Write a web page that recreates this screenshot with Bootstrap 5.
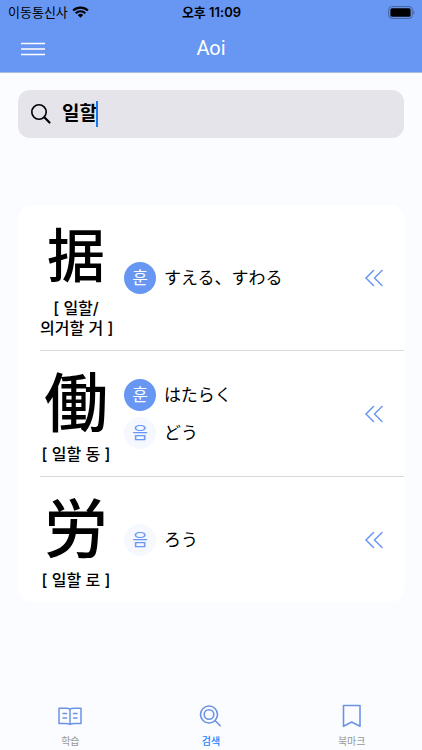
<!DOCTYPE html>
<html lang="ko">
<head>
<meta charset="utf-8">
<meta name="viewport" content="width=device-width, initial-scale=1">
<title>Aoi</title>
<link href="https://cdn.jsdelivr.net/npm/bootstrap@5.3.0/dist/css/bootstrap.min.css" rel="stylesheet">
<style>
  :root { --aoi: #6897f3; --page: #fbfcff; }
  body { background: var(--page); color: #000; font-family: Inter, "Noto Sans CJK KR", sans-serif; }
  svg { display: block; fill: none; }
  .top-area { background: var(--aoi); border-bottom: 1px solid #a9bbdc; }
  .status-row { height: 24px; padding: 0 7px 0 8px; font-size: 13px; line-height: 24px; }
  .status-row > * { flex: 1 1 0; }
  .title-row { height: 48px; padding: 0 20px; }
  .title-row > * { flex: 1 1 0; }
  .title-text { font-family: Roboto, sans-serif; font-size: 20px; line-height: 28px; }
  .search-box { background: #e5e4ea; height: 48px; border-radius: 12px; margin: 17px 18px 0; padding: 0 12px; }
  .search-field { margin-left: 10px; }
  .search-input { font-size: 19px; line-height: 28px; font-weight: 700; color: #000; }
  .search-input:focus { outline: 0; }
  .caret-bar { position: absolute; left: 34px; top: 1px; width: 2px; height: 26px; background: #1677f0; }
  .kanji-list { margin: 67px 18px 0; background: #fff; border-radius: 14px; padding-left: 22px; }
  .kanji-row { padding-right: 20px; }
  .kanji-row + .kanji-row { border-top: 1px solid #d9d9dc; }
  .kanji-cell { width: 72px; padding: 7px 0 12px; }
  .glyph { font-family: "Noto Sans CJK JP", sans-serif; font-weight: 500; font-size: 64px; line-height: 80px; margin-bottom: 6px; }
  .glyph-fit { font-size: 58px; }
  .meaning { font-size: 16px; line-height: 20px; font-weight: 500; }
  .readings { margin-left: 12px; gap: 6px; }
  .kind { width: 32px; height: 32px; font-size: 17px; line-height: 32px; background: #f5f8ff; color: var(--aoi); }
  .kind-hun { background: var(--aoi); color: #fff; }
  .kana { font-family: "Noto Sans CJK JP", sans-serif; font-size: 17px; line-height: 24px; font-weight: 400; margin-left: 8px; padding-bottom: 2px; }
  .tab-bar { padding: 0 0 2px; }
  .tab-link { font-size: 10px; line-height: 14px; color: #999; gap: 6px; }
  .tab-link.current { color: #1683ff; font-weight: 500; }
</style>
</head>
<body class="d-flex flex-column min-vh-100">
<header class="top-area">
  <div class="status-row d-flex align-items-center">
    <div class="d-flex align-items-center gap-1">
      <span>이동통신사</span>
      <svg width="17" height="12" viewBox="0 0 17 12" aria-hidden="true"><path d="M1.1 4.6a10.6 10.6 0 0 1 14.8 0M3.7 7.2a6.9 6.9 0 0 1 9.6 0" stroke="#000" stroke-width="2.1"/><path d="M8.5 11.8 5.8 9.1a3.9 3.9 0 0 1 5.4 0z" fill="#000"/></svg>
    </div>
    <div class="text-center fw-semibold">오후 11:09</div>
    <div class="d-flex justify-content-end">
      <svg width="27" height="13" viewBox="0 0 27 13" aria-hidden="true"><rect x=".7" y=".6" width="23.6" height="11.8" rx="3" stroke="#456398"/><rect x="2.4" y="2.2" width="20.2" height="8.6" rx="1.6" fill="#000"/><path d="M25.4 4.5c1.5.6 1.5 3.4 0 4z" fill="#456398"/></svg>
    </div>
  </div>
  <div class="title-row d-flex align-items-center">
    <div><button type="button" class="btn p-0 border-0" aria-label="메뉴"><svg width="26" height="16" viewBox="0 0 26 16"><path d="M1 1.500h24M1 7h24M1 12.500h24" stroke="#fff" stroke-width="1.6"/></svg></button></div>
    <h1 class="title-text text-white text-center fw-normal m-0">Aoi</h1>
    <div></div>
  </div>
</header>

<main class="flex-grow-1">
  <div class="search-box d-flex align-items-center">
    <label for="q" aria-label="검색"><svg width="22" height="22" viewBox="0 0 22 22"><circle cx="9" cy="9" r="7.200" stroke="#000" stroke-width="1.600"/><path d="m14.300 14.300 5.200 5.200" stroke="#000" stroke-width="2.200" stroke-linecap="round"/></svg></label>
    <div class="search-field position-relative flex-grow-1">
      <input id="q" type="text" class="search-input w-100 border-0 bg-transparent p-0 d-block" value="일할">
      <span class="caret-bar"></span>
    </div>
  </div>

  <section class="kanji-list">
    <article class="kanji-row d-flex align-items-center">
      <div class="kanji-cell text-center">
        <div class="glyph glyph-fit" lang="ja">据</div>
        <div class="meaning text-nowrap">[ 일할/<br>의거할 거 ]</div>
      </div>
      <div class="readings d-flex flex-column flex-grow-1">
        <div class="d-flex align-items-center"><span class="kind kind-hun rounded-circle text-center">훈</span><span class="kana" lang="ja">すえる、すわる</span></div>
      </div>
      <button type="button" class="btn p-0 border-0" aria-label="펼치기"><svg width="20" height="18" viewBox="0 0 20 18"><path d="M9.500 1.500 2 9l7.500 7.500M18 1.500 10.500 9l7.500 7.500" stroke="#6897f3" stroke-width="1.500" stroke-linecap="round"/></svg></button>
    </article>
    <article class="kanji-row d-flex align-items-center">
      <div class="kanji-cell text-center">
        <div class="glyph" lang="ja">働</div>
        <div class="meaning text-nowrap">[ 일할 동 ]</div>
      </div>
      <div class="readings d-flex flex-column flex-grow-1">
        <div class="d-flex align-items-center"><span class="kind kind-hun rounded-circle text-center">훈</span><span class="kana" lang="ja">はたらく</span></div>
        <div class="d-flex align-items-center"><span class="kind rounded-circle text-center">음</span><span class="kana" lang="ja">どう</span></div>
      </div>
      <button type="button" class="btn p-0 border-0" aria-label="펼치기"><svg width="20" height="18" viewBox="0 0 20 18"><path d="M9.500 1.500 2 9l7.500 7.500M18 1.500 10.500 9l7.500 7.500" stroke="#6897f3" stroke-width="1.500" stroke-linecap="round"/></svg></button>
    </article>
    <article class="kanji-row d-flex align-items-center">
      <div class="kanji-cell text-center">
        <div class="glyph" lang="ja">労</div>
        <div class="meaning text-nowrap">[ 일할 로 ]</div>
      </div>
      <div class="readings d-flex flex-column flex-grow-1">
        <div class="d-flex align-items-center"><span class="kind rounded-circle text-center">음</span><span class="kana" lang="ja">ろう</span></div>
      </div>
      <button type="button" class="btn p-0 border-0" aria-label="펼치기"><svg width="20" height="18" viewBox="0 0 20 18"><path d="M9.500 1.500 2 9l7.500 7.500M18 1.500 10.500 9l7.500 7.500" stroke="#6897f3" stroke-width="1.500" stroke-linecap="round"/></svg></button>
    </article>
  </section>
</main>

<nav class="tab-bar d-flex">
  <a href="#study" class="tab-link col d-flex flex-column align-items-center text-decoration-none">
    <svg width="24" height="24" viewBox="0 0 24 24" stroke="#6b93e4" stroke-width="1.500" stroke-linejoin="round" stroke-linecap="round"><path d="M12 5.200C10.500 4 8.500 4.200 7 4.200H1V19.500h6c2 0 3.800 0 5 1 1.200-1 3-1 5-1h6V4.200h-6c-1.500 0-3.500-.2-5 1zM12 5.200v15.300M5 9.500h3.500M5 14h3.500M15.500 9.500H19M15.500 14H19"/></svg>
    <span>학습</span>
  </a>
  <a href="#search" class="tab-link current col d-flex flex-column align-items-center text-decoration-none" aria-current="page">
    <svg width="24" height="24" viewBox="0 0 24 24" stroke="#6b93e4" stroke-width="1.600" stroke-linecap="round"><circle cx="10" cy="10.500" r="8.500"/><circle cx="10" cy="10.500" r="4.800"/><path d="m16.200 16.700 5 5"/></svg>
    <span>검색</span>
  </a>
  <a href="#bookmark" class="tab-link col d-flex flex-column align-items-center text-decoration-none">
    <svg width="24" height="24" viewBox="0 0 24 24" stroke="#6b93e4" stroke-width="1.600" stroke-linejoin="round"><path d="M3.500 1.500H20v20.800L11.700 18 3.500 22.300z"/></svg>
    <span>북마크</span>
  </a>
</nav>
<script src="https://cdn.jsdelivr.net/npm/bootstrap@5.3.0/dist/js/bootstrap.bundle.min.js"></script>
</body>
</html>
